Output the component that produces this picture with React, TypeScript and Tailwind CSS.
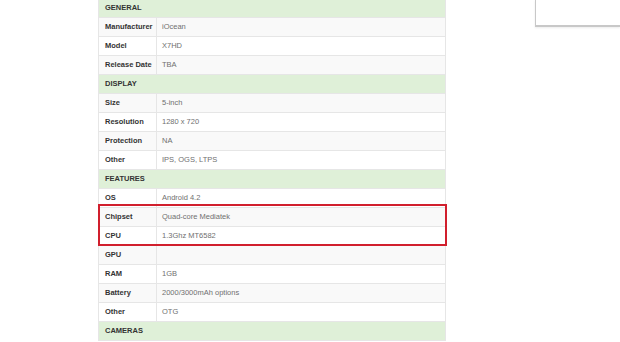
type Row = { label: string; value?: string } | { header: string };

const rows: Row[] = [
  { header: 'GENERAL' },
  { label: 'Manufacturer', value: 'iOcean' },
  { label: 'Model', value: 'X7HD' },
  { label: 'Release Date', value: 'TBA' },
  { header: 'DISPLAY' },
  { label: 'Size', value: '5-inch' },
  { label: 'Resolution', value: '1280 x 720' },
  { label: 'Protection', value: 'NA' },
  { label: 'Other', value: 'IPS, OGS, LTPS' },
  { header: 'FEATURES' },
  { label: 'OS', value: 'Android 4.2' },
  { label: 'Chipset', value: 'Quad-core Mediatek' },
  { label: 'CPU', value: '1.3Ghz MT6582' },
  { label: 'GPU', value: '' },
  { label: 'RAM', value: '1GB' },
  { label: 'Battery', value: '2000/3000mAh options' },
  { label: 'Other', value: 'OTG' },
  { header: 'CAMERAS' },
];

export default function App() {
  return (
    <div
      className="relative h-[342px] w-[620px] overflow-hidden bg-white text-[7.5px] leading-none"
      style={{ fontFamily: '"Liberation Sans", Arial, sans-serif' }}
    >
      <div className="flex items-start">
        {/* spec table */}
        <div className="relative ml-[98px] mt-[-2px] w-[348px]">
          <table className="w-full table-fixed border-collapse">
            <colgroup>
              <col className="w-[58px]" />
              <col />
            </colgroup>
            <tbody>
              {rows.map((row, i) =>
                'header' in row ? (
                  <tr key={i} className="h-[19px] bg-[#dff0d8]">
                    <td colSpan={2} className="border border-[#e6e6e6] px-[6px] font-bold text-[#333]">
                      {row.header}
                    </td>
                  </tr>
                ) : (
                  <tr key={i} className={`h-[19px] ${i % 2 === 1 ? 'bg-[#f9f9f9]' : 'bg-white'}`}>
                    <td className="whitespace-nowrap border border-[#e6e6e6] pl-[6px] pr-[2px] font-bold text-[#333]">
                      {row.label}
                    </td>
                    <td className="border border-[#e6e6e6] px-[5px] text-[#707070]">{row.value}</td>
                  </tr>
                )
              )}
            </tbody>
          </table>
          {/* highlight around Chipset / CPU */}
          <div className="pointer-events-none absolute left-0 top-[206px] h-[42px] w-[349px] border-2 border-[#d11f2d]" />
        </div>

        {/* side box */}
        <div className="ml-auto h-[27px] w-[85px] border-b-2 border-l border-[#c8c8c8] bg-white shadow-[0_1px_2px_rgba(0,0,0,0.08)]" />
      </div>
    </div>
  );
}
